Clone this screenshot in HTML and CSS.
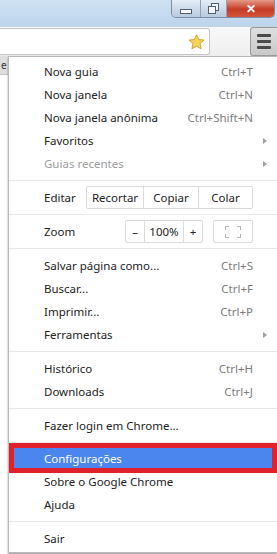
FILE: index.html
```html
<!DOCTYPE html>
<html lang="pt-BR">
<head>
  <meta charset="UTF-8" />
  <title>Menu do Chrome</title>
  <link rel="stylesheet" href="styles.css">
</head>
<body>
  <div class="titlebar">
    <div class="win-btns">
      <div class="win-btn min"><span class="min-bar"></span></div>
      <div class="win-btn restore"><span class="sq back"></span><span class="sq front"></span></div>
      <div class="win-btn close">✕</div>
    </div>
  </div>

  <div class="toolbar">
    <div class="omnibox">
      <svg class="star" width="17" height="16" viewBox="0 0 17 16">
        <path d="M8.5 0.8 L10.7 5.6 L15.9 6.1 L12 9.6 L13.1 14.8 L8.5 12.1 L3.9 14.8 L5 9.6 L1.1 6.1 L6.3 5.6 Z" fill="#f7d55c" stroke="#d4a126" stroke-width="1"/>
      </svg>
    </div>
    <div class="menu-btn">
      <span></span><span></span><span></span>
    </div>
  </div>

  <div class="content">
    <div class="page-edge">
      <div class="tabstrip">e</div>
    </div>

    <div class="menu">
      <div class="item"><span>Nova guia</span><span class="key">Ctrl+T</span></div>
      <div class="item"><span>Nova janela</span><span class="key">Ctrl+N</span></div>
      <div class="item"><span>Nova janela anônima</span><span class="key">Ctrl+Shift+N</span></div>
      <div class="item"><span>Favoritos</span><span class="arrow"></span></div>
      <div class="item disabled"><span>Guias recentes</span><span class="arrow"></span></div>
      <div class="sep"></div>

      <div class="item row">
        <span class="row-label">Editar</span>
        <div class="group edit">
          <span>Recortar</span><span>Copiar</span><span>Colar</span>
        </div>
      </div>
      <div class="sep"></div>

      <div class="item row">
        <span class="row-label">Zoom</span>
        <div class="zoom-tools">
          <div class="group zoom">
            <span class="minus">–</span><span class="pct">100%</span><span class="plus">+</span>
          </div>
          <div class="group full">
            <svg width="16" height="12" viewBox="0 0 16 12">
              <path d="M0.5 4 V0.5 H4 M12 0.5 H15.5 V4 M15.5 8 V11.5 H12 M4 11.5 H0.5 V8" fill="none" stroke="#b5b5b5" stroke-width="1"/>
            </svg>
          </div>
        </div>
      </div>
      <div class="sep"></div>

      <div class="item"><span>Salvar página como...</span><span class="key">Ctrl+S</span></div>
      <div class="item"><span>Buscar...</span><span class="key">Ctrl+F</span></div>
      <div class="item"><span>Imprimir...</span><span class="key">Ctrl+P</span></div>
      <div class="item"><span>Ferramentas</span><span class="arrow"></span></div>
      <div class="sep"></div>

      <div class="item"><span>Histórico</span><span class="key">Ctrl+H</span></div>
      <div class="item"><span>Downloads</span><span class="key">Ctrl+J</span></div>
      <div class="sep"></div>

      <div class="item"><span>Fazer login em Chrome...</span></div>
      <div class="sep"></div>

      <div class="item active"><span>Configurações</span></div>
      <div class="item"><span>Sobre o Google Chrome</span></div>
      <div class="item"><span>Ajuda</span></div>
      <div class="sep"></div>

      <div class="item"><span>Sair</span></div>
    </div>
  </div>
</body>
</html>
```

FILE: styles.css
```css
body {
  margin: 0;
  width: 277px;
  height: 554px;
  overflow: hidden;
  background-color: #ffffff;
  font-family: 'Noto Sans', 'Open Sans', sans-serif;
  font-size: 11.5px;
  color: #222222;
}

/* barra de título */
.titlebar {
  height: 27px;
  background: linear-gradient(#cfe2f3, #bcd3ea);
  display: flex;
  justify-content: flex-end;
}
.win-btns {
  display: flex;
  height: 17px;
  margin-right: 2px;
  border: 1px solid #7a8ea6;
  border-top: none;
  border-radius: 0 0 5px 5px;
  overflow: hidden;
}
.win-btn {
  display: flex;
  align-items: center;
  justify-content: center;
  background: linear-gradient(#e4edf7, #b7c9dd);
  border-right: 1px solid #8ea2b8;
}
.win-btn.min { width: 28px; }
.win-btn.restore { width: 25px; position: relative; }
.win-btn.close {
  width: 47px;
  border-right: none;
  background: linear-gradient(#e49a88, #c63b25 55%, #d4553b);
  color: #ffffff;
  font-size: 12px;
  font-weight: bold;
}
.min-bar {
  width: 10px;
  height: 3px;
  margin-top: 5px;
  background: #ffffff;
  border: 1px solid #4f5e70;
}
.sq {
  position: absolute;
  width: 6px;
  height: 6px;
  border: 1px solid #4f5e70;
  background: #f4f7fb;
}
.sq.back { left: 10px; top: 3px; }
.sq.front { left: 7px; top: 6px; }

/* barra de ferramentas */
.toolbar {
  height: 29px;
  display: flex;
  align-items: flex-start;
  background: linear-gradient(#f9f9f9, #eeeeee);
}
.omnibox {
  width: 209px;
  height: 25px;
  margin-top: 1px;
  background: #ffffff;
  border: 1px solid #c4c4c4;
  border-left: none;
  border-radius: 0 3px 3px 0;
  display: flex;
  align-items: center;
  justify-content: flex-end;
}
.star { margin-right: 4px; }
.menu-btn {
  margin-left: auto;
  width: 26px;
  height: 27px;
  background: linear-gradient(#dedede, #c9c9c9);
  border: 1px solid #9a9a9a;
  border-right: none;
  border-radius: 3px 0 0 3px;
  display: flex;
  flex-direction: column;
  align-items: center;
  justify-content: center;
  gap: 3px;
}
.menu-btn span {
  width: 14px;
  height: 3px;
  background: #4a4a4a;
  border-radius: 1px;
}

/* conteúdo */
.content {
  display: flex;
  height: 498px;
}
.page-edge {
  width: 8px;
  flex-shrink: 0;
  overflow: hidden;
}
.tabstrip {
  height: 18px;
  line-height: 18px;
  background: #dedede;
  border-bottom: 1px solid #c8c8c8;
  padding-left: 1px;
  font-size: 10px;
  color: #333333;
}

/* menu */
.menu {
  flex: 1;
  background: #ffffff;
  border: 1px solid #b9b9b9;
  border-right: none;
  box-shadow: 0 2px 2px rgba(0, 0, 0, 0.35);
  padding-top: 3px;
  box-sizing: border-box;
  height: 497px;
}
.item {
  height: 23px;
  display: flex;
  align-items: center;
  justify-content: space-between;
  padding: 0 24px 0 35px;
}
.key {
  color: #7c7c7c;
}
.arrow {
  width: 0;
  height: 0;
  margin-right: -14px;
  border-top: 3px solid transparent;
  border-bottom: 3px solid transparent;
  border-left: 4px solid #a0a0a0;
}
.item.disabled {
  color: #9c9c9c;
}
.item.active {
  height: 20px;
  margin: 1px 5px 2px 5px;
  padding-left: 30px;
  background: #4a86ed;
  color: #ffffff;
  box-shadow: 0 0 0 5px #e0202b;
}
.sep {
  height: 1px;
  margin: 5px 0;
  background: #e8e8e8;
}

.row {
  justify-content: flex-start;
}
.row-label {
  width: 42px;
}
.group {
  display: flex;
  height: 23px;
  border: 1px solid #dadada;
  border-radius: 2px;
  box-sizing: border-box;
}
.group span {
  display: flex;
  align-items: center;
  justify-content: center;
  border-left: 1px solid #dadada;
}
.group span:first-child { border-left: none; }
.edit { width: 167px; }
.edit span:nth-child(1) { width: 56px; }
.edit span:nth-child(2) { width: 54px; }
.edit span:nth-child(3) { flex: 1; }

.zoom-tools {
  display: flex;
  gap: 10px;
  margin-left: auto;
}
.zoom span.minus { width: 18px; }
.zoom span.pct { width: 38px; }
.zoom span.plus { width: 18px; }
.full {
  width: 40px;
  align-items: center;
  justify-content: center;
}
```
